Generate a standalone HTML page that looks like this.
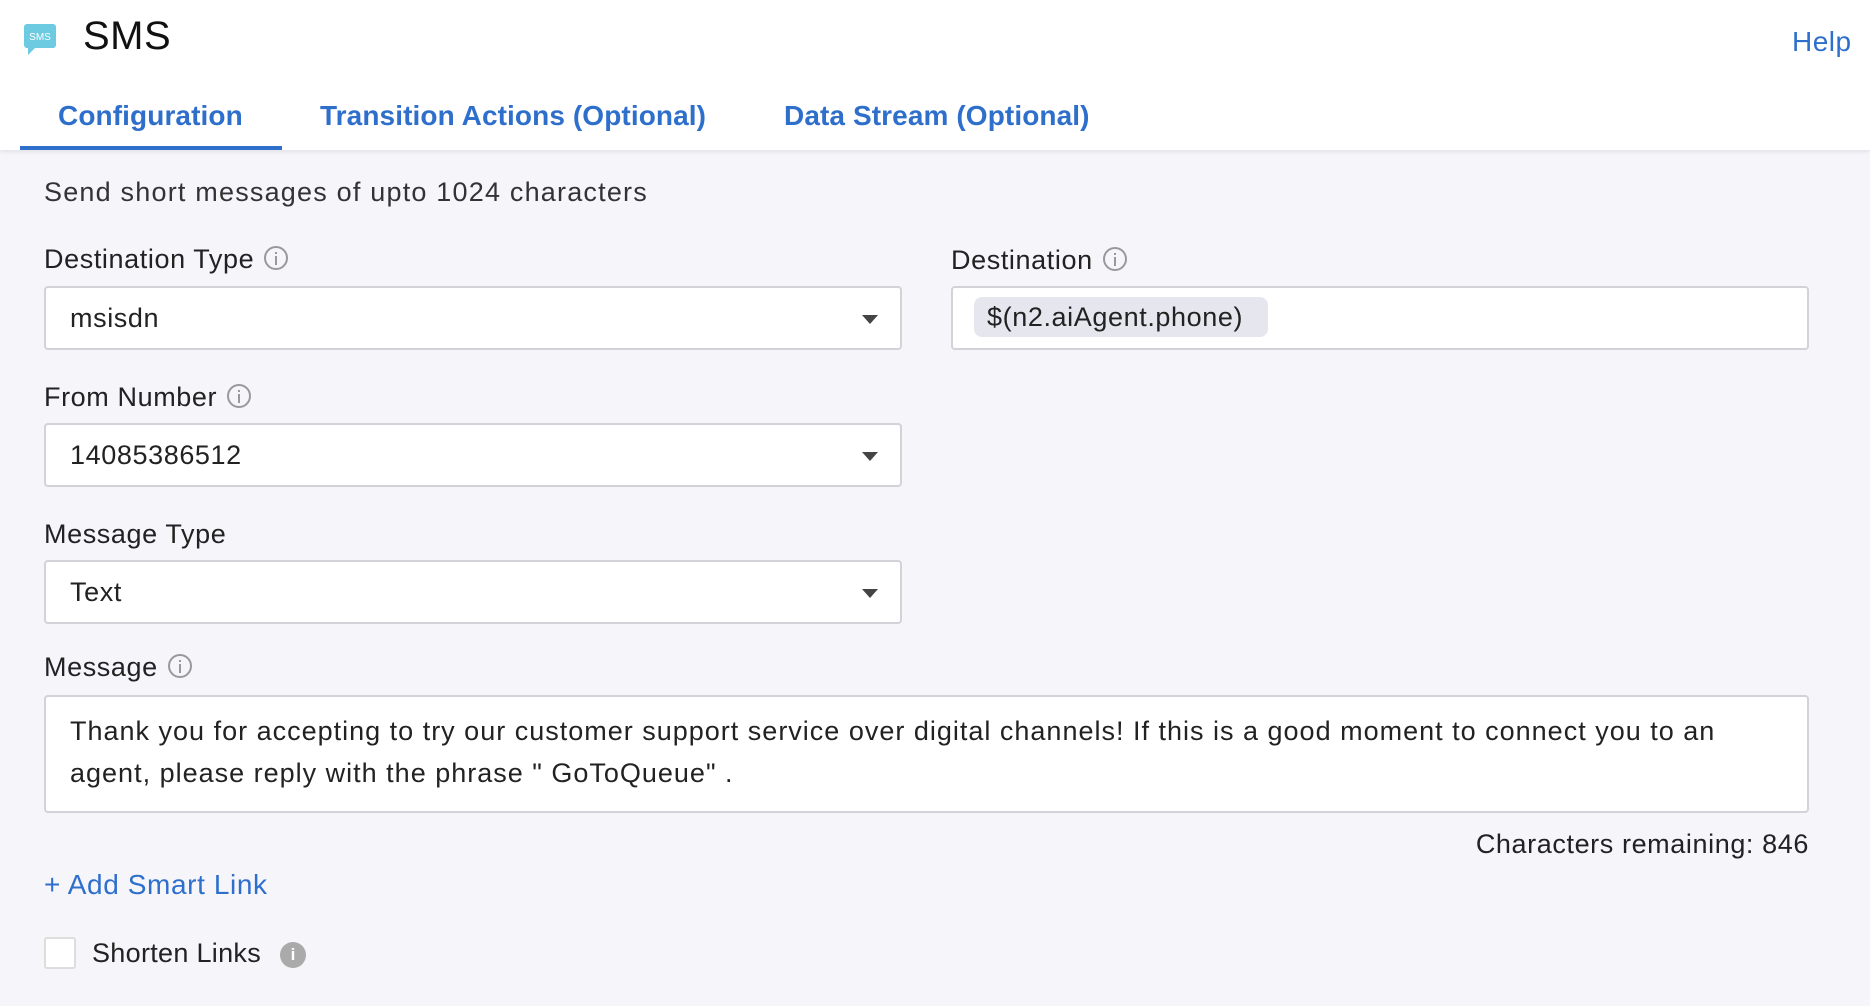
<!DOCTYPE html><html><head><style>
body{margin:0;width:1870px;height:1006px;background:#f5f5fa;font-family:"Liberation Sans",sans-serif;color:#222;position:relative;overflow:hidden}
.a{position:absolute;white-space:nowrap}
.hdr{position:absolute;left:0;top:0;width:1870px;height:150px;background:#fff;box-shadow:0 2px 4px rgba(0,0,0,.08)}
.tab{position:absolute;top:100px;font-size:28px;font-weight:bold;color:#2f6fcc;letter-spacing:0.1px}
.lbl{font-size:27px;color:#222;letter-spacing:0.6px}
.inp{position:absolute;background:#fff;border:2px solid #d2d2d8;border-radius:4px;box-sizing:border-box}
.inp span{position:absolute;left:24px;font-size:27px;color:#222;letter-spacing:0.6px}
.car{position:absolute;right:22px;top:27px;width:0;height:0;border-left:8px solid transparent;border-right:8px solid transparent;border-top:9px solid #444}
.i{display:inline-block;width:24px;height:24px;border:2px solid #999;border-radius:50%;box-sizing:border-box;vertical-align:middle;position:relative;margin-left:10px;top:-3px}
.i:before{content:"";position:absolute;left:9px;top:4px;width:2px;height:2px;background:#999}
.i:after{content:"";position:absolute;left:9px;top:8px;width:2px;height:9px;background:#999}
</style></head><body>
<div class="hdr"></div>
<svg class="a" style="left:22px;top:22px" width="36" height="34" viewBox="0 0 36 34"><rect x="2" y="2" width="32" height="24" rx="3" fill="#6ccbe0"/><path d="M6 25 L6 33 L14 25Z" fill="#6ccbe0"/><text x="18" y="18" font-size="10" fill="#fff" text-anchor="middle" font-family="Liberation Sans">SMS</text></svg>
<div class="a" style="left:83px;top:14px;font-size:40px;color:#111;letter-spacing:0.5px">SMS</div>
<div class="a" style="left:1792px;top:26px;font-size:28px;color:#2f6fcc;letter-spacing:0.5px">Help</div>
<div class="tab a" style="left:58px">Configuration</div>
<div class="tab a" style="left:320px">Transition Actions (Optional)</div>
<div class="tab a" style="left:784px">Data Stream (Optional)</div>
<div class="a" style="left:20px;top:146px;width:262px;height:4px;background:#2f6fcc"></div>
<div class="a" style="left:44px;top:177px;font-size:27px;color:#333;letter-spacing:1.2px">Send short messages of upto 1024 characters</div>
<div class="a lbl" style="left:44px;top:244px">Destination Type<span class="i"></span></div>
<div class="inp" style="left:44px;top:286px;width:858px;height:64px"><span style="top:15px">msisdn</span><div class="car"></div></div>
<div class="a lbl" style="left:951px;top:245px">Destination<span class="i"></span></div>
<div class="inp" style="left:951px;top:286px;width:858px;height:64px"><div style="position:absolute;left:21px;top:9px;width:294px;height:40px;background:#e6e6ee;border-radius:8px"></div><span style="top:14px;left:34px">$(n2.aiAgent.phone)</span></div>
<div class="a lbl" style="left:44px;top:382px">From Number<span class="i"></span></div>
<div class="inp" style="left:44px;top:423px;width:858px;height:64px"><span style="top:15px">14085386512</span><div class="car"></div></div>
<div class="a lbl" style="left:44px;top:519px">Message Type</div>
<div class="inp" style="left:44px;top:560px;width:858px;height:64px"><span style="top:15px">Text</span><div class="car"></div></div>
<div class="a lbl" style="left:44px;top:652px">Message<span class="i"></span></div>
<div class="inp" style="left:44px;top:695px;width:1765px;height:118px"><span style="top:13px;line-height:42px;white-space:normal;width:1720px;letter-spacing:1px">Thank you for accepting to try our customer support service over digital channels! If this is a good moment to connect you to an agent, please reply with the phrase " GoToQueue" .</span></div>
<div class="a lbl" style="right:61px;top:829px">Characters remaining: 846</div>
<div class="a" style="left:44px;top:869px;font-size:28px;color:#2f6fcc;letter-spacing:0.6px">+ Add Smart Link</div>
<div class="a" style="left:44px;top:937px;width:32px;height:32px;background:#fff;border:2px solid #ddd;border-radius:3px;box-sizing:border-box"></div>
<div class="a lbl" style="left:92px;top:938px;letter-spacing:0.3px">Shorten Links</div>
<div class="a" style="left:280px;top:942px;width:26px;height:26px;border-radius:50%;background:#aaa;color:#fff;font-size:17px;font-weight:bold;text-align:center;line-height:26px">i</div>
</body></html>
